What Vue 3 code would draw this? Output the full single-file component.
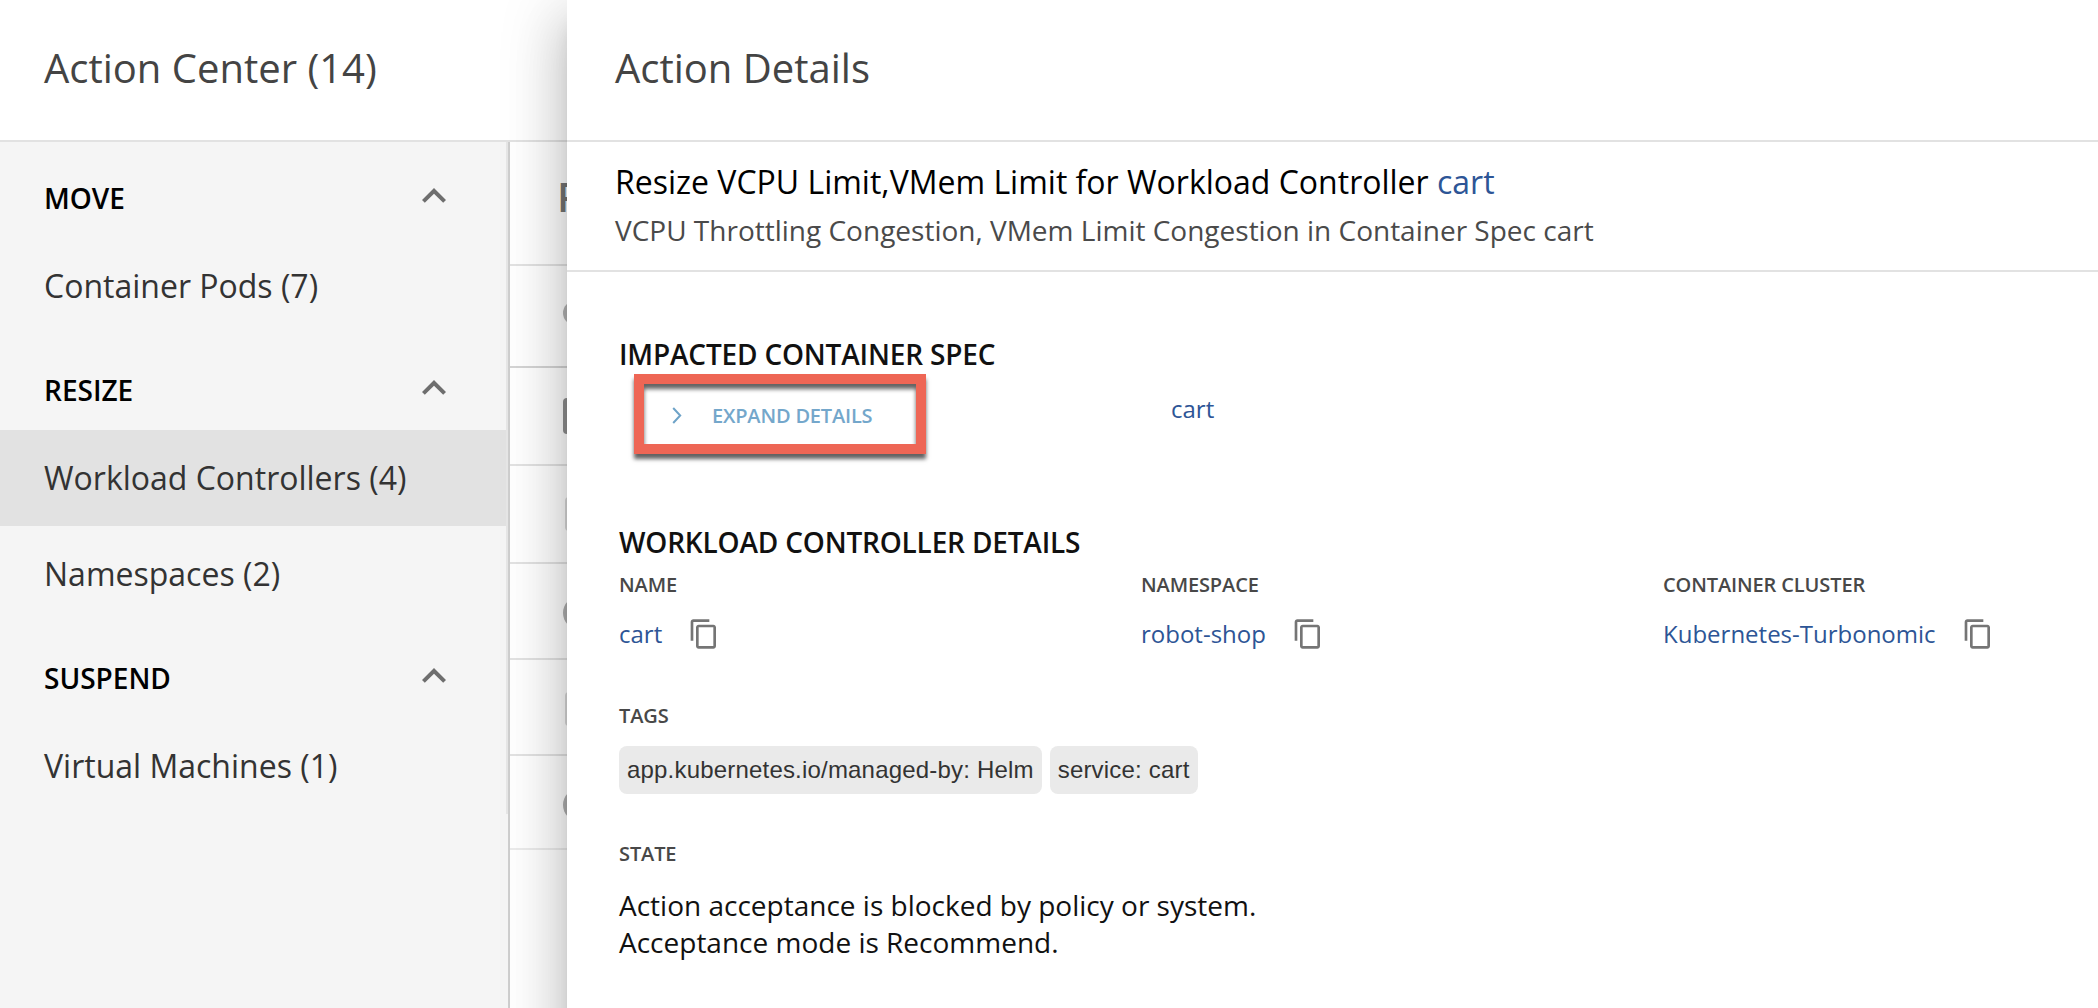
<script setup>
const groups = [
  { title: 'MOVE', items: [{ label: 'Container Pods (7)' }] },
  {
    title: 'RESIZE',
    items: [{ label: 'Workload Controllers (4)', selected: true }, { label: 'Namespaces (2)' }],
  },
  { title: 'SUSPEND', items: [{ label: 'Virtual Machines (1)' }] },
]
const rows = [
  { kind: 'dot', size: 'r102' },
  { kind: 'box', size: 'r98' },
  { kind: 'tile', size: 'r98' },
  { kind: 'ring', size: 'r96' },
  { kind: 'tile', size: 'r96' },
  { kind: 'ring', size: 'r94' },
]
const details = [
  { label: 'NAME', value: 'cart' },
  { label: 'NAMESPACE', value: 'robot-shop' },
  { label: 'CONTAINER CLUSTER', value: 'Kubernetes-Turbonomic' },
]
const tags = ['app.kubernetes.io/managed-by: Helm', 'service: cart']
</script>

<template>
  <div class="page">
    <header class="top"><h1>Action Center (14)</h1></header>
    <div class="body">
      <nav class="side">
        <div class="list">
          <section v-for="g in groups" :key="g.title">
            <div class="group">
              <span>{{ g.title }}</span>
              <svg viewBox="0 0 24 24"><path d="M12 8l-6 6 1.41 1.41L12 10.83l4.59 4.58L18 14z" /></svg>
            </div>
            <div v-for="i in g.items" :key="i.label" class="item" :class="{ selected: i.selected }">{{ i.label }}</div>
          </section>
        </div>
      </nav>
      <main class="table">
        <div class="thead">P</div>
        <div v-for="(r, n) in rows" :key="n" class="row" :class="r.size"><i :class="r.kind"></i></div>
      </main>
    </div>

    <aside class="drawer">
      <header class="dtop"><h1>Action Details</h1></header>
      <div class="summary">
        <h2>Resize VCPU Limit,VMem Limit for Workload Controller <a>cart</a></h2>
        <p>VCPU Throttling Congestion, VMem Limit Congestion in Container Spec cart</p>
      </div>
      <div class="content">
        <h3>IMPACTED CONTAINER SPEC</h3>
        <div class="spec">
          <button class="expand">
            <svg viewBox="0 0 10 17"><path d="M1.2 1l7 7.5-7 7.5" /></svg>
            <span>EXPAND DETAILS</span>
          </button>
          <a class="link">cart</a>
        </div>
        <h3>WORKLOAD CONTROLLER DETAILS</h3>
        <div class="cols">
          <div v-for="d in details" :key="d.label" class="col">
            <div class="label">{{ d.label }}</div>
            <div class="value">
              <a class="link">{{ d.value }}</a>
              <svg viewBox="0 0 24 24"><path d="M16 1H4c-1.1 0-2 .9-2 2v14h2V3h12V1zm3 4H8c-1.1 0-2 .9-2 2v14c0 1.1.9 2 2 2h11c1.1 0 2-.9 2-2V7c0-1.1-.9-2-2-2zm0 16H8V7h11v14z" /></svg>
            </div>
          </div>
        </div>
        <div class="label tagl">TAGS</div>
        <div class="tags"><span v-for="t in tags" :key="t">{{ t }}</span></div>
        <div class="label statel">STATE</div>
        <p class="state">Action acceptance is blocked by policy or system.<br />Acceptance mode is Recommend.</p>
      </div>
    </aside>
  </div>
</template>

<style>
body { margin: 0; background: #fff; }
</style>

<style scoped>
* { box-sizing: border-box; }
h1, h2, h3, p { margin: 0; font-weight: 400; white-space: nowrap; }
.page {
  position: relative;
  width: 2098px;
  height: 1008px;
  overflow: hidden;
  background: #fff;
  font-family: "Open Sans", "Noto Sans", sans-serif;
}
.top, .dtop { height: 142px; border-bottom: 2px solid #e2e2e2; }
h1 { font-size: 40px; line-height: 56px; color: #444; padding-top: 40px; }
.top { padding-left: 44px; }
.body { display: flex; height: 866px; }
.side { width: 510px; border-right: 2px solid #cecece; background: #f5f5f5; }
.list { border-right: 2px solid #e6e6e6; }
.group {
  height: 96px;
  padding: 30px 48px 0 44px;
  display: flex;
  justify-content: space-between;
  font-size: 28px;
  font-weight: 600;
  line-height: 52px;
  color: #000;
}
.group svg { width: 48px; height: 48px; fill: #6e6e6e; }
.item { height: 96px; padding-left: 44px; font-size: 32px; line-height: 95px; color: #333; white-space: nowrap; }
.selected { background: #e2e2e2; }
.table { flex: 1; }
.thead { height: 124px; padding: 28px 0 0 47px; border-bottom: 2px solid #e2e2e2; font-size: 40px; font-weight: 600; line-height: 54px; color: #757575; }
.row { display: flex; align-items: center; padding-left: 53px; border-bottom: 2px solid #e2e2e2; }
.r102 { height: 102px; padding-bottom: 6px; border-color: #d4d4d4; }
.r98 { height: 98px; }
.r96 { height: 96px; padding-top: 4px; }
.r94 { height: 94px; padding-top: 5px; border-color: #ebebeb; }
.row i { display: block; }
.dot { width: 24px; height: 24px; border-radius: 50%; background: #b4b4b4; }
.box { width: 36px; height: 36px; border-radius: 4px; background: #909090; }
.tile { width: 34px; height: 34px; margin-left: 2px; border-radius: 4px; background: #dadada; }
.ring { width: 34px; height: 34px; border-radius: 50%; background: #b0b0b0; }

.drawer {
  position: absolute;
  top: 0;
  left: 567px;
  width: 1531px;
  height: 1108px;
  background: #fff;
  box-shadow: 0 16px 20px -10px rgba(0, 0, 0, .2), 0 32px 48px 4px rgba(0, 0, 0, .14), 0 12px 60px 10px rgba(0, 0, 0, .12);
}
.dtop { padding-left: 48px; }
.summary { height: 130px; padding: 18px 0 0 48px; border-bottom: 2px solid #e2e2e2; }
h2 { font-size: 32px; line-height: 44px; color: #000; }
h2 a { color: #2d5596; }
.summary p { font-size: 28px; line-height: 40px; padding-top: 6px; color: #4a4a4a; }
.content { padding: 62px 0 0 52px; }
h3 { font-size: 28px; font-weight: 600; letter-spacing: -.18px; line-height: 40px; color: #111; }
.spec { display: flex; height: 148px; }
.expand {
  width: 292px;
  height: 80px;
  margin-left: 15px;
  padding: 2px 0 0 28px;
  display: flex;
  align-items: center;
  gap: 30px;
  background: none;
  border: 10px solid #ee6655;
  box-shadow: 0 5px 4px rgba(0, 0, 0, .62), inset 0 5px 4px rgba(0, 0, 0, .62);
  font: 600 20px "Open Sans", sans-serif;
  letter-spacing: -.18px;
  color: #74a7cb;
  white-space: nowrap;
}
.expand svg { flex: none; width: 10px; height: 17px; fill: none; stroke: #6ea3c8; stroke-width: 2; }
.link { font-size: 24px; line-height: 34px; color: #2d5596; white-space: nowrap; }
.spec .link { margin: 18px 0 0 245px; }
.cols { display: flex; padding-top: 9px; }
.col { flex: none; width: 522px; }
.label { font-size: 20px; font-weight: 600; letter-spacing: -.12px; line-height: 28px; color: #484848; }
.value { display: flex; align-items: center; gap: 26px; height: 34px; margin-top: 18px; }
.value svg { width: 32px; height: 32px; fill: #757575; }
.tagl { margin-top: 51px; }
.tags { display: flex; gap: 8px; margin-top: 16px; }
.tags span {
  height: 48px;
  padding: 0 8px;
  border-radius: 8px;
  background: #eaeaea;
  font: 24px/47px "Liberation Sans", Arial, sans-serif;
  letter-spacing: .19px;
  color: #333;
  white-space: nowrap;
}
.statel { margin-top: 46px; }
.state { margin-top: 19px; font-size: 28px; line-height: 37px; color: #111; }
</style>
